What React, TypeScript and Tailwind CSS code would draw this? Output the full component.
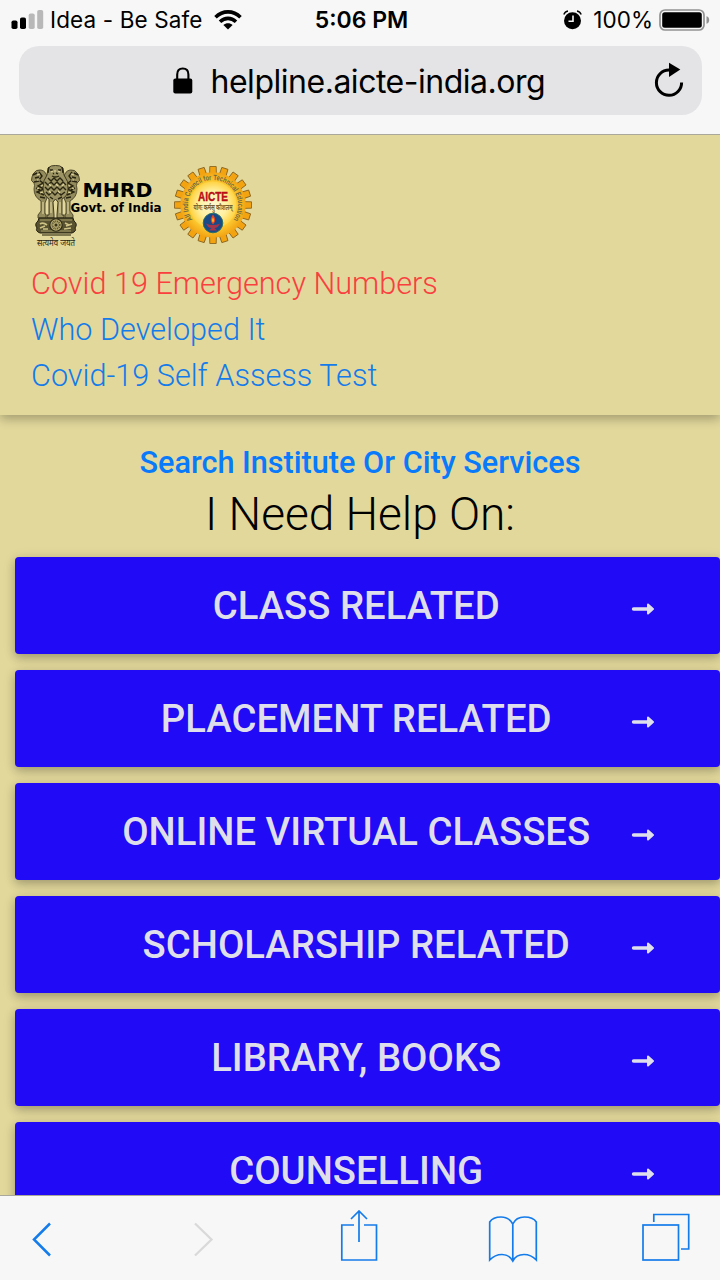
import React from "react";

const services = [
  "CLASS RELATED",
  "PLACEMENT RELATED",
  "ONLINE VIRTUAL CLASSES",
  "SCHOLARSHIP RELATED",
  "LIBRARY, BOOKS",
  "COUNSELLING",
];

function StatusBar() {
  return (
    <div className="grid h-10 grid-cols-[1fr_auto_1fr] items-center pl-[11px] pr-[10px] text-[22.5px] leading-none">
      <div className="flex items-center">
        <svg width="33" height="20" viewBox="0 0 33 20" className="shrink-0">
          <rect x="0.5" y="10.5" width="6" height="8.5" rx="1.8" fill="#000" />
          <rect x="9" y="7.5" width="6" height="11.5" rx="1.8" fill="#000" />
          <rect x="17.7" y="3.5" width="6" height="15.5" rx="1.8" fill="#b8b8b8" />
          <rect x="26.2" y="0" width="6" height="19" rx="1.8" fill="#b8b8b8" />
        </svg>
        <span className="ml-[6px] whitespace-nowrap tracking-[0.12px]">Idea - Be Safe</span>
        <svg width="28" height="20" viewBox="0 0 28 20" className="ml-[11px] shrink-0">
          <g fill="none" stroke="#000" strokeWidth="3.6">
            <path d="M1.5 7.3C8.8 .1 19.2 .1 26.5 7.3" />
            <path d="M6 11.7C10.8 7.2 17.2 7.2 22 11.7" />
          </g>
          <path d="M9.4 15C12 12.7 16 12.7 18.6 15L14 19.5Z" fill="#000" />
        </svg>
      </div>
      <span className="pl-[2px] text-[23px] font-semibold">5:06 PM</span>
      <div className="flex items-center justify-end">
        <svg width="19" height="20" viewBox="0 0 19 20">
          <circle cx="9.5" cy="10.7" r="8.5" fill="#000" />
          <path d="M.8 4.5Q2 1.5 5 1M14 1Q17 1.5 18.2 4.5" fill="none" stroke="#000" strokeWidth="1.4" />
          <path d="M10 5.5V11.3H5.5" fill="none" stroke="#f7f7f7" strokeWidth="1.6" />
        </svg>
        <span className="ml-[11px]">100%</span>
        <svg width="51" height="22" viewBox="0 0 51 22" className="ml-[6px]">
          <rect x="1" y="1" width="44" height="20" rx="5" fill="none" stroke="#929292" strokeWidth="1.7" />
          <rect x="3.2" y="3.2" width="39.6" height="15.6" rx="2.5" fill="#000" />
          <path d="M47.5 7.2Q50.2 8 50.2 11Q50.2 14 47.5 14.8Z" fill="#929292" />
        </svg>
      </div>
    </div>
  );
}

function AddressBar() {
  return (
    <div className="mx-[18.5px] mt-[6px] flex h-[69px] items-center rounded-[20px] bg-[#e4e4e6] pl-[154.5px] pr-[18px]">
      <svg width="20" height="28" viewBox="0 0 20 28" className="shrink-0">
        <rect x="0.3" y="11.5" width="19" height="15" rx="2" fill="#000" />
        <path d="M4.2 13V7.5Q4.2 1.5 9.8 1.5T15.4 7.5V13" fill="none" stroke="#000" strokeWidth="2.1" />
      </svg>
      <span className="ml-[17.5px] mt-[2px] whitespace-nowrap text-[32px] leading-none tracking-[-0.48px]">
        helpline.aicte-india.org
      </span>
      <svg width="30" height="36" viewBox="0 0 30 36" className="-mt-[2px] ml-auto shrink-0">
        <path d="M16 8.1H15A12.6 12.6 0 1 0 27.6 20.5" fill="none" stroke="#000" strokeWidth="3" />
        <path d="M15 .8V15L26.3 7.6Z" fill="#000" />
      </svg>
    </div>
  );
}

function SideLion() {
  return (
    <>
      <path d="M2 10Q5 5 10 6Q15 7 16 13V34L14 39V50H15V54H7V51L10 47V37Q3 33 3 25Q4 21 3 19Q-1 17 1 13Z" fill="#938b5c" stroke="#3c361d" strokeWidth=".8" />
      <path d="M2 11L6 9M4 14L8 13M3 18L8 17M8 8L11 12L8 16L12 19L7 22L13 25L6 28L13 31M5 24L9 26M9 33L14 34" fill="none" stroke="#28230f" strokeWidth="1.4" />
      <path d="M6 11L9 10M6 16H9M10 22L13 21M6 25L8 24M9 29L12 28M12 38V50" fill="none" stroke="#e0d59c" strokeWidth="1.1" />
    </>
  );
}

function MhrdLogo() {
  return (
    <svg width="134" height="86" viewBox="0 0 134 86">
      <SideLion />
      <g transform="translate(49 0) scale(-1 1)"><SideLion /></g>
      <path d="M17 4Q20 1 24.5 1.5Q29 1 32 4L33 11Q38 17 37 25Q37 32 31 35V51H33V54H26V51L27 38L24.5 35L22 38L23 51V54H16V51H18V35Q12 31 12 24Q12 16 16 11Z" fill="#9c9464" stroke="#342e17" strokeWidth=".9" />
      <path d="M19 6H22M27 6H30M22 10Q24.5 8 27 10M21 12Q24.5 14 28 12M18 3L17 9M31 3L32 9M17 14L20 17L23 14L26 17L29 14L32 17M14 18L17 21L20 18L23 21L26 18L29 21L32 18L35 21M14 23L17 26L20 23L23 26L26 23L29 26L32 23L35 26M15 28L18 31L21 28L24 31L27 28L30 31L34 28M19 33L22 35M27 35L31 33" fill="none" stroke="#2b2611" strokeWidth="1.4" />
      <path d="M20 8L22 7M27 7L29 8M24 6V10M18 20L20 22M25 20L27 22M31 22L33 20M18 27L20 29M27 27L29 29M20 38V49M29 38V49" fill="none" stroke="#e0d59c" strokeWidth="1.1" />
      <path d="M8 54H42L43 57Q47 60 44 64Q46 67 41 69H9Q4 67 6 64Q3 60 7 57Z" fill="#575130" stroke="#242010" />
      <path d="M9 56H41M10 67H40" stroke="#bcb176" strokeWidth=".8" />
      <path d="M9 60Q12 58 16 61M9 64L14 62M12 65H17M41 60L35 62M34 59L38 61M33 65L40 64" stroke="#cdc184" strokeWidth="1.7" fill="none" />
      <circle cx="25" cy="61" r="6.2" fill="#b1a66d" stroke="#2b2714" strokeWidth="1.1" />
      <circle cx="25" cy="61" r="3.7" fill="none" stroke="#5c5530" strokeWidth="1.8" strokeDasharray="1 .8" />
      <circle cx="25" cy="61" r="1.5" fill="#39331a" />
      <path d="M11 71H40" stroke="#4b4526" strokeWidth="1.3" />
      <text x="6" y="81.5" fontSize="8.7" textLength="38" lengthAdjust="spacingAndGlyphs" fill="#262313" className="font-['Noto_Sans_Devanagari','Noto_Sans',sans-serif]">सत्यमेव जयते</text>
      <text x="51.5" y="33" fontSize="19" textLength="70" lengthAdjust="spacingAndGlyphs" className="font-['DejaVu_Sans'] font-bold">MHRD</text>
      <text x="39.5" y="48" fontSize="11.5" textLength="91" lengthAdjust="spacingAndGlyphs" className="font-['DejaVu_Sans'] font-bold">Govt. of India</text>
    </svg>
  );
}

function AicteLogo() {
  return (
    <svg width="80" height="80" viewBox="-40 -40 80 80">
      <defs>
        <radialGradient id="gear">
          <stop offset=".6" stopColor="#ffd83d" />
          <stop offset="1" stopColor="#f2a313" />
        </radialGradient>
        <radialGradient id="disc">
          <stop stopColor="#fff8d0" />
          <stop offset=".6" stopColor="#fff0a0" />
          <stop offset="1" stopColor="#ffd342" />
        </radialGradient>
        <path id="ring" d="M-20.5 14.5A25.1 25.1 0 1 1 20.5 14.5" />
      </defs>
      {Array.from({ length: 20 }, (_, i) => (
        <path key={i} d="M-3.4-31L-3.2-38.5H3.2L3.4-31Z" transform={`rotate(${i * 18})`} fill="#f2a30f" stroke="#8c6620" strokeWidth=".9" />
      ))}
      <circle r="32.8" fill="url(#gear)" />
      <circle r="23.5" fill="url(#disc)" />
      <text fontSize="7.6" fill="#6d6940" className="font-['Liberation_Sans'] font-bold">
        <textPath href="#ring" textLength="109" lengthAdjust="spacingAndGlyphs">All India Council for Technical Education</textPath>
      </text>
      <text y="-4.5" textAnchor="middle" fontSize="12.5" textLength="30" lengthAdjust="spacingAndGlyphs" fill="#c40d16" stroke="#a30c12" strokeWidth=".4" className="font-['Liberation_Sans'] font-bold">AICTE</text>
      <text y="5" textAnchor="middle" fontSize="8" textLength="39" lengthAdjust="spacingAndGlyphs" fill="#77602c" className="font-['Noto_Sans_Devanagari','Noto_Sans',sans-serif] font-bold">योगः कर्मसु कौशलम्</text>
      <circle cx="0" cy="18" r="9.8" fill="#174a86" stroke="#2c6f68" strokeWidth="1" />
      <path d="M0 9.5Q-4.5 15.5 0 19.5Q4.5 15.5 0 9.5Z" fill="#ed4522" />
      <path d="M0 12.5Q-2 15.5 0 17.5Q2 15.5 0 12.5Z" fill="#ffb52e" />
      <path d="M-7 18.5Q0 21.5 7 18.5Q5 23 1.5 23L4 25.5H-4L-1.5 23Q-5 23-7 18.5Z" fill="#a5354b" />
    </svg>
  );
}

function SiteHeader() {
  return (
    <header className="relative z-10 h-[279.5px] shrink-0 bg-[#e2d89c] pl-[31px] pt-[29px] shadow-[0_4px_10px_rgba(0,0,0,0.28)]">
      <div className="flex h-[90px] items-start">
        <MhrdLogo />
        <div className="ml-[8px] mt-[1px]"><AicteLogo /></div>
      </div>
      <nav className="mt-[7px] flex flex-col font-['Roboto'] text-[30.65px] font-light leading-[46px]">
        <a className="whitespace-nowrap text-[#f9403e]">Covid 19 Emergency Numbers</a>
        <a className="whitespace-nowrap text-[#147bea]">Who Developed It</a>
        <a className="whitespace-nowrap text-[#147bea]">Covid-19 Self Assess Test</a>
      </nav>
    </header>
  );
}

function ServiceButton({ label }: { label: string }) {
  return (
    <button className="grid h-[97.6px] w-full shrink-0 grid-cols-1 items-center rounded-[4px] bg-[#210af5] text-[#dfdfec] shadow-[0_4px_10px_rgba(0,0,0,0.22),0_2px_14px_rgba(0,0,0,0.1)]">
      <span className="col-start-1 row-start-1 whitespace-nowrap pr-[23px] pt-[2px] text-center font-['Roboto'] text-[38.3px] font-medium leading-none">{label}</span>
      <svg width="24" height="14" viewBox="0 0 24 14" className="col-start-1 row-start-1 mr-[65px] mt-[8px] justify-self-end">
        <path d="M2.5 7H18" stroke="currentColor" strokeWidth="3.4" strokeLinecap="round" />
        <path d="M17 2.5L22 7L17 11.5Z" fill="currentColor" stroke="currentColor" strokeWidth="2" strokeLinejoin="round" />
      </svg>
    </button>
  );
}

function Toolbar() {
  return (
    <footer className="relative z-20 flex h-[85px] shrink-0 items-start border-t border-[#aaa89b] bg-[#f7f7f7] pl-[32px] pt-[14px] text-[#147bea]">
      <svg width="19" height="60" viewBox="0 0 19 60" fill="none" stroke="currentColor" strokeWidth="2.5">
        <path d="M18 13.5L2 29.5L18 45.5" />
      </svg>
      <svg width="20" height="60" viewBox="0 0 20 60" fill="none" stroke="#d9d9d9" strokeWidth="2.3" className="ml-[143px]">
        <path d="M1 13.5L17.5 29.5L1 45.5" />
      </svg>
      <svg width="38" height="60" viewBox="0 0 38 60" fill="none" stroke="currentColor" strokeWidth="1.7" className="ml-[126px]">
        <path d="M14 15H1.8V50H36.5V15H24M19 32V2M11 9L19 1L27 9" />
      </svg>
      <svg width="50" height="60" viewBox="0 0 50 60" fill="none" stroke="currentColor" strokeWidth="1.7" className="ml-[110px]">
        <path d="M24.8 14Q21 7 13 7Q5 7 1.7 12V50Q7 44.5 14 44.5Q21 44.5 24.8 51Q28 44.5 36 44.5Q43 44.5 48.3 50V12Q45 7 36.5 7Q28 7 24.8 14V51" />
      </svg>
      <svg width="49" height="60" viewBox="0 0 49 60" fill="none" stroke="currentColor" strokeWidth="1.7" className="ml-[103px]">
        <rect x="2" y="15" width="35.5" height="35" />
        <path d="M12.8 12V4.5H47.7V39H40" />
      </svg>
    </footer>
  );
}

export default function App() {
  return (
    <div className="flex h-[1280px] w-[720px] flex-col overflow-hidden bg-[#e2d89c] font-['Inter'] text-black">
      <div className="h-[135px] shrink-0 border-b border-[#aaa89b] bg-[#f7f7f7]">
        <StatusBar />
        <AddressBar />
      </div>
      <main className="flex min-h-0 flex-1 flex-col overflow-hidden">
        <SiteHeader />
        <section className="flex shrink-0 flex-col pt-[29px] text-center font-['Roboto']">
          <a className="h-[36px] text-[30.65px] font-medium leading-[37px] text-[#087afa]">Search Institute Or City Services</a>
          <h1 className="h-[77.2px] text-[46px] font-light leading-[69px]">I Need Help On:</h1>
        </section>
        <div className="flex flex-col gap-[15.4px] pl-[15.4px]">
          {services.map((label) => <ServiceButton key={label} label={label} />)}
        </div>
      </main>
      <Toolbar />
    </div>
  );
}
